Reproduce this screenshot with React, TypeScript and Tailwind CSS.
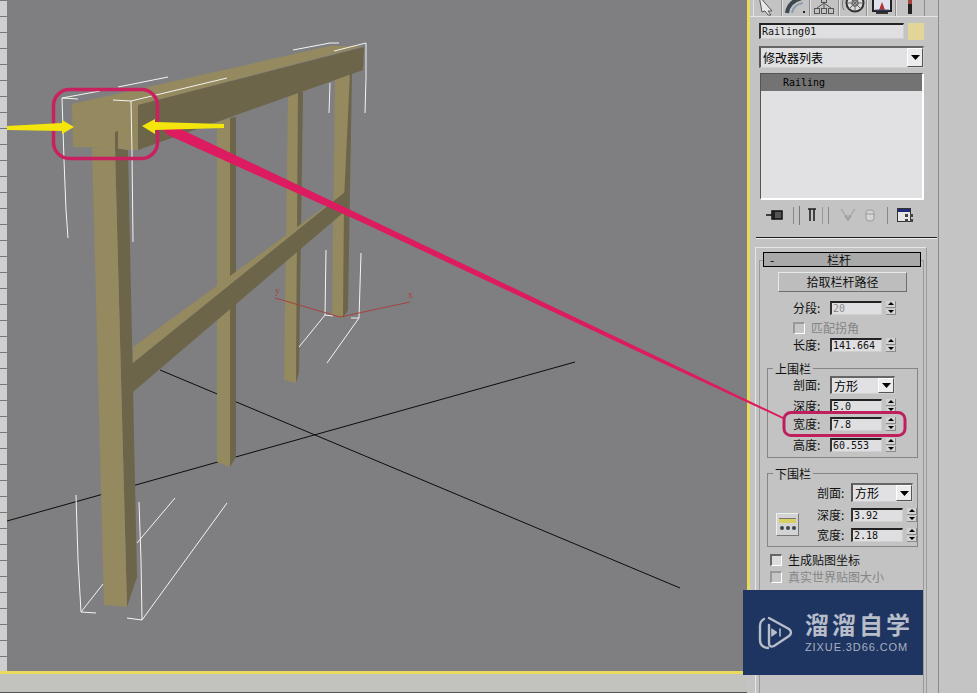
const cjk = "font-['Noto_Sans_CJK_SC','Liberation_Sans',sans-serif]"
const mono = "font-['DejaVu_Sans_Mono','Noto_Sans_CJK_SC',monospace]"

const ticks = Array.from({ length: 42 })

const wires = [
  '62,98 64,160 66,210 68,238', '62,98 78,99', '62,98 100,91', '118,87 168,77', '113,100 131,101',
  '131,101 132,153 133,242', '131,101 227,78', '293,50 330,43 339,43', '334,51 366,43',
  '366,43 366,77 365,113', '330,83 329,113', '326,250 325,315 333,316', '361,253 359,318 351,318',
  '325,315 299,347', '359,318 327,363', '76,495 78,560 81,612 96,613', '81,612 103,584',
  '139,502 141,560 142,620 127,618', '142,620 227,503', '137,543 175,498',
]

function Scene() {
  return (
    <svg width="740" height="671" viewBox="7 0 740 671" className="block">
      {/* home grid */}
      <path d="M7 521 L575 362 M160 370 L680 588" stroke="#0c0c0c" strokeWidth="1" fill="none" />
      {/* back posts */}
      <polygon points="335,77 350,72 346,312 343,318 332,315" fill="#94895f" />
      <polygon points="350,72 352,72 348,310 343,318 344,200" fill="#6d654a" />
      <polygon points="288,95 298,92 296,383 284,380" fill="#94895f" />
      <polygon points="298,92 303,92 299,373 296,383" fill="#6d654a" />
      <polygon points="217,122 230,118 230,467 217,462" fill="#94895f" />
      <polygon points="230,118 236,117 236,457 230,467" fill="#6d654a" />
      {/* mid rail */}
      <polygon points="133,347 345,192 133,363" fill="#94895f" />
      <polygon points="125,365 133,363 345,192 344,212 133,392 125,390" fill="#6d654a" />
      {/* top rail */}
      <polygon points="72,104 330,46 364,46 138,105" fill="#94895f" />
      <polygon points="138,105 364,47 363,70 138,150" fill="#6d654a" />
      {/* front post */}
      <polygon points="115,148 128,150 137,577 127,607" fill="#6d654a" />
      <polygon points="92,148 115,148 127,607 104,605" fill="#94895f" />
      <polygon points="72,104 130,100 138,105 138,150 128,150 115,148 73,147" fill="#94895f" />
      <polygon points="115,132 118,131 118,150 115,150" fill="#6d654a" />
      {/* selection box */}
      {wires.map(p => (
        <polyline key={p} points={p} stroke="#f4f4f4" strokeWidth="1" fill="none" />
      ))}
      {/* pivot */}
      <polyline points="275,298 340,317 410,302" stroke="#a5423c" strokeWidth="1" fill="none" />
      <text x="275" y="294" fontSize="10" fill="#a5423c" fontFamily="Liberation Serif">y</text>
      <text x="408" y="298" fontSize="10" fill="#a5423c" fontFamily="Liberation Serif">x</text>
    </svg>
  )
}

function Arrows() {
  return (
    <svg width="977" height="693" className="absolute left-0 top-0 pointer-events-none">
      <polygon points="160,127 172,125 360,214.5 660,358 783,417 783,419 660,362 360,221.5 168,135" fill="#dd1b60" />
      <rect x="53.5" y="89.5" width="104" height="69" rx="16" fill="none" stroke="#c9215f" strokeWidth="3.5" />
      <rect x="784" y="412.5" width="121" height="23" rx="7" fill="none" stroke="#bf1f5c" strokeWidth="3" />
      <polygon points="7,126 62,123 62,120 74,127 62,134 62,131 7,130" fill="#f4e60c" />
      <polygon points="224,124 155,122 155,119 142,126 155,134 155,130 224,128" fill="#f4e60c" />
    </svg>
  )
}

function TabIcon({ n }: { n: number }) {
  if (n === 0) return <svg width="26" height="16" viewBox="0 0 26 16"><path d="M5 -4 L18 11 L14 11 L17 15 L14 15 L11 11 L8 12 Z" fill="#e8e8e8" stroke="#555" /></svg>
  if (n === 1) return <svg width="26" height="16" viewBox="0 0 26 16"><path d="M4 13 C5 5 11 0 19 -2" stroke="#3c4750" strokeWidth="4" fill="none" /><path d="M9 13 C10 8 14 4 20 3" stroke="#8b9cb0" strokeWidth="2" fill="none" /><rect x="20" y="11" width="2" height="2" fill="#222" /></svg>
  if (n === 2) return <svg width="26" height="16" viewBox="0 0 26 16" fill="none" stroke="#555"><rect x="10.5" y="-2.5" width="5" height="5" /><rect x="3.5" y="8.5" width="5" height="5" /><rect x="10.5" y="8.5" width="5" height="5" /><rect x="17.5" y="8.5" width="5" height="5" /><path d="M13 2 V8 M13 3 L6 8 M13 3 L20 8" /></svg>
  if (n === 3) return <svg width="26" height="16" viewBox="0 0 26 16" fill="none"><circle cx="15" cy="3" r="8.5" fill="#ddd" stroke="#333" strokeWidth="2" /><circle cx="15" cy="3" r="3" stroke="#777" strokeWidth="1.5" /><path d="M15 -5 V11 M7 3 H23 M9 -3 L21 9 M21 -3 L9 9" stroke="#666" /><path d="M3 0 C2 4 2 7 4 10" stroke="#777" /></svg>
  if (n === 4) return <svg width="26" height="16" viewBox="0 0 26 16"><rect x="4" y="-4" width="18" height="15" fill="#dfe3ee" stroke="#222" strokeWidth="2" /><path d="M13 2 L16 10 H10 Z" fill="#b4342f" /><path d="M6 10 H20" stroke="#3f5a94" /><rect x="7" y="12" width="12" height="2" fill="#333" /></svg>
  return <svg width="26" height="16" viewBox="0 0 26 16"><rect x="11" y="-2" width="4" height="6" fill="#a6443a" /><rect x="11" y="4" width="4" height="10" fill="#222" /></svg>
}

function Tabs() {
  return (
    <div className="flex shrink-0 h-[17px] pl-[3px] border-b border-b-[#e4e4e4] overflow-hidden">
      {[0, 1, 2, 3, 4, 5].map(n => (
        <div key={n} className="w-[28.6px] h-[16px] flex justify-center border-l border-l-[#e2e2e2] border-r border-r-[#8d8d8d] overflow-hidden">
          <TabIcon n={n} />
        </div>
      ))}
    </div>
  )
}

function Arrow() {
  return <svg width="9" height="5" viewBox="0 0 9 5"><polygon points="0,0 9,0 4.5,5" fill="#000" /></svg>
}

function Select({ text, className }: { text: string; className: string }) {
  return (
    <div className={`flex shrink-0 items-center justify-between bg-[#e1e1e3] border-t-2 border-l-2 border-t-[#666] border-l-[#555] border-b border-r border-[#d0d0d0] ${className}`}>
      <span className={`pl-[2px] text-[12px] leading-none text-black ${cjk}`}>{text}</span>
      <div className="w-[16px] h-full flex items-center justify-center bg-[#ececec] border border-b-[#555] border-r-[#555] border-t-white border-l-white">
        <Arrow />
      </div>
    </div>
  )
}

function Spinner() {
  return (
    <div className="w-[10px] h-[14px] flex flex-col gap-px">
      {[0, 1].map(i => (
        <div key={i} className="flex-1 bg-[#d2d2d2] border-b border-b-[#8a8a8a] border-r border-r-[#8a8a8a] flex items-center justify-center">
          <svg width="6" height="3" viewBox="0 0 6 3"><polygon points={i === 0 ? '3,0 6,3 0,3' : '0,0 6,0 3,3'} fill="#000" /></svg>
        </div>
      ))}
    </div>
  )
}

function Field({ value, label, labelWidth = 'w-[37px]', fieldWidth = 'w-[52px]', disabled, className }: {
  value: string; label: string; labelWidth?: string; fieldWidth?: string; disabled?: boolean; className: string
}) {
  return (
    <div className={`flex items-center h-[14px] ${className}`}>
      <span className={`${labelWidth} text-[12px] leading-none text-[#111] ${cjk}`}>{label}:</span>
      <div className={`${fieldWidth} h-[14px] bg-[#dfdfe1] border-t-2 border-t-[#222] border-l-2 border-l-[#333] border-b border-r border-[#cfcfcf] flex items-center overflow-hidden`}>
        <span className={`pl-px text-[10px] leading-none ${mono} ${disabled ? 'text-[#8c8c8c]' : 'text-[#111]'}`}>{value}</span>
      </div>
      <div className="ml-[4px]"><Spinner /></div>
    </div>
  )
}

function Check({ label, disabled, className }: { label: string; disabled?: boolean; className: string }) {
  return (
    <div className={`flex items-center ${className}`}>
      <div className={`w-[12px] h-[12px] border-t-2 border-l-2 border-b border-r border-b-white border-r-white ${disabled ? 'border-t-[#999] border-l-[#999] bg-[#c6c6c6]' : 'border-t-[#666] border-l-[#666] bg-[#dcdcdc]'}`} />
      <span className={`ml-[6px] text-[12px] leading-none ${cjk} ${disabled ? 'text-[#858585]' : 'text-[#111]'}`}>{label}</span>
    </div>
  )
}

function Group({ title, className, children }: { title: string; className: string; children: React.ReactNode }) {
  return (
    <div className={`relative border border-[#858585] ${className}`}>
      <span className={`absolute left-[5px] -top-[7px] px-[2px] bg-[#c3c3c3] text-[12px] leading-[13px] text-[#111] ${cjk}`}>{title}</span>
      {children}
    </div>
  )
}

function Stack() {
  return (
    <div className="flex shrink-0 items-center h-[18px] mt-[6px] pl-[16px]">
      <svg width="17" height="14" viewBox="0 0 17 14" className="block"><path d="M0 7 H6 M6 3 H8 V11 H6 Z M8 3 H16 V11 H8 Z" stroke="#111" strokeWidth="1.5" fill="#555" /></svg>
      <div className="ml-[10px] w-px h-[17px] bg-[#888]" />
      <div className="ml-[5px] w-px h-[19px] bg-[#777]" />
      <svg width="9" height="14" viewBox="0 0 9 14" className="block ml-[8px]"><path d="M0 1 H8 M2 1 V13 M6 1 V13" stroke="#222" strokeWidth="1.6" fill="none" /></svg>
      <div className="ml-[5px] w-px h-[17px] bg-[#999]" />
      <div className="ml-[5px] w-px h-[17px] bg-[#888]" />
      <svg width="16" height="14" viewBox="0 0 16 14" className="block ml-[11px]"><path d="M1 1 L8 11 L15 1 M5 8 L8 13 L11 8 Z" stroke="#9a9a9a" fill="none" /></svg>
      <svg width="10" height="14" viewBox="0 0 10 14" className="block ml-[9px]"><rect x="1" y="2" width="8" height="11" rx="3" stroke="#9a9a9a" fill="#d4d4d4" /><path d="M1 6 H9" stroke="#9a9a9a" /></svg>
      <div className="ml-[12px] w-px h-[17px] bg-[#888]" />
      <svg width="17" height="15" viewBox="0 0 17 15" className="block ml-[9px]"><rect x="0.5" y="0.5" width="13" height="13" fill="#e6e6e6" stroke="#333" /><rect x="1" y="1" width="12" height="3" fill="#1c2a78" /><rect x="8" y="6" width="3" height="3" fill="#444" /><rect x="13" y="6" width="3" height="3" fill="#444" /><rect x="8" y="11" width="3" height="3" fill="#444" /><rect x="13" y="11" width="3" height="3" fill="#444" /></svg>
    </div>
  )
}

function Rollout() {
  return (
    <div className="mt-[8px] ml-[5px] w-[172px] flex-1 min-h-0 overflow-hidden border-l border-t border-r border-l-[#e6e6e6] border-t-[#e6e6e6] border-r-[#9c9c9c] pl-[3px]">
      <div className="mt-[12px] w-[165px] h-[500px] border border-[#9a9a9a]">
        <div className="-mt-[9px] ml-[3px] w-[158px] h-[15px] flex items-center border border-black bg-[#a9a9a9] px-[6px]">
          <span className={`w-[8px] text-[12px] leading-none text-black ${cjk}`}>-</span>
          <span className={`flex-1 text-center pr-[14px] text-[12px] leading-none text-[#111] ${cjk}`}>栏杆</span>
        </div>
        <div className={`mt-[5px] ml-[18px] w-[129px] h-[20px] flex items-center justify-center bg-[#bdbdbd] border border-t-[#e8e8e8] border-l-[#e8e8e8] border-b-[#6e6e6e] border-r-[#6e6e6e] text-[12px] leading-none text-[#111] ${cjk}`}>
          拾取栏杆路径
        </div>
        <Field label="分段" value="20" disabled className="mt-[9px] ml-[33px]" />
        <Check label="匹配拐角" disabled className="mt-[7px] ml-[33px]" />
        <Field label="长度" value="141.664" className="mt-[4px] ml-[33px]" />
        <Group title="上围栏" className="mt-[16px] ml-[7px] w-[151px] h-[90px]">
          <div className="mt-[7px] ml-[25px] flex items-center">
            <span className={`w-[37px] text-[12px] leading-none text-[#111] ${cjk}`}>剖面:</span>
            <Select text="方形" className="w-[65px] h-[18px]" />
          </div>
          <Field label="深度" value="5.0" className="mt-[5px] ml-[25px]" />
          <Field label="宽度" value="7.8" className="mt-[4px] ml-[25px]" />
          <Field label="高度" value="60.553" className="mt-[7px] ml-[25px]" />
        </Group>
        <Group title="下围栏" className="mt-[15px] ml-[7px] w-[151px] h-[74px]">
          <div className="flex">
            <div className="mt-[39px] ml-[8px] w-[23px] h-[23px] bg-[#d3d3d3] border border-t-[#eee] border-l-[#eee] border-b-[#777] border-r-[#777] flex flex-col items-center pt-[4px]">
              <div className="w-[17px] h-[5px] bg-[#d8cf62] border-t border-t-[#777]" />
              <div className="mt-[3px] flex gap-[2px]">
                <div className="w-[4px] h-[4px] rounded-full bg-[#3c4650]" />
                <div className="w-[4px] h-[4px] rounded-full bg-[#3c4650]" />
                <div className="w-[4px] h-[4px] rounded-full bg-[#3c4650]" />
              </div>
            </div>
            <div className="ml-[18px]">
              <div className="mt-[9px] flex items-center">
                <span className={`w-[34px] text-[12px] leading-none text-[#111] ${cjk}`}>剖面:</span>
                <Select text="方形" className="w-[62px] h-[19px]" />
              </div>
              <Field label="深度" value="3.92" labelWidth="w-[34px]" className="mt-[6px]" />
              <Field label="宽度" value="2.18" labelWidth="w-[34px]" className="mt-[6px]" />
            </div>
          </div>
        </Group>
        <Check label="生成贴图坐标" className="mt-[7px] ml-[10px]" />
        <Check label="真实世界贴图大小" disabled className="mt-[5px] ml-[10px]" />
      </div>
    </div>
  )
}

function Watermark() {
  return (
    <div className="absolute left-[743px] top-[590px] w-[180px] h-[85px] bg-[#1e3461] flex items-center pl-[15px]">
      <svg width="35" height="35" viewBox="0 0 35 35" fill="none" stroke="#b7bdc9" strokeWidth="2.4" strokeLinecap="round" strokeLinejoin="round" className="block">
        <path d="M11 3 L31 14 Q35 17.5 31 21 L16 31 Q11 33 11 28 V10" />
        <path d="M6 4 Q2 6 2 11 V25 Q2 32 10 33" />
        <polygon points="14,14 19,17.5 14,21" fill="#b7bdc9" strokeWidth="1" />
        <path d="M22 14 V21" strokeWidth="1.6" />
      </svg>
      <div className="ml-[12px] flex flex-col">
        <div className={`text-[24px] leading-[24px] font-bold tracking-[3px] text-[#b7bdc9] whitespace-nowrap ${cjk}`}>溜溜自学</div>
        <div className="mt-[5px] text-[11px] leading-[12px] tracking-[0.9px] text-[#a9b1c0] whitespace-nowrap font-['Liberation_Sans',sans-serif]">ZIXUE.3D66.COM</div>
      </div>
    </div>
  )
}

export default function App() {
  return (
    <div className="relative w-[977px] h-[693px] overflow-hidden flex bg-[#c4c4c4]">
      <div className="w-[747px] flex flex-col">
        <div className="flex h-[671px] shrink-0">
          <div className="w-[7px] bg-[#cfcfcf] overflow-hidden">
            {ticks.map((_, i) => (
              <div key={i} className="h-[16px] border-t border-t-[#777]" />
            ))}
          </div>
          <div className="flex-1 bg-[#7f7f81] overflow-hidden">
            <Scene />
          </div>
        </div>
        <div className="h-[3px] shrink-0 bg-[#e9d95c]" />
        <div className="flex-1 bg-[#c2c2be] border-b border-b-[#555]" />
      </div>
      <div className="w-[3px] h-[674px] bg-[#e9d95c]" />
      <div className="w-[189px] h-full flex flex-col bg-[#c3c3c3] border-r border-r-[#8a8a8a]">
        <Tabs />
        <div className="shrink-0 mt-[6px] ml-[9px] flex">
          <div className="w-[145px] h-[16px] bg-[#dfdfe1] border-t-2 border-l-2 border-t-[#222] border-l-[#333] border-b border-r border-[#cfcfcf] flex items-center">
            <span className={`pl-px text-[10px] leading-none text-[#111] ${mono}`}>Railing01</span>
          </div>
          <div className="ml-[4px] w-[16px] h-[17px] bg-[#e3d497]" />
        </div>
        <Select text="修改器列表" className="mt-[6px] ml-[9px] w-[165px] h-[22px]" />
        <div className="shrink-0 mt-[5px] ml-[10px] w-[164px] h-[127px] bg-[#e1e1e3] border-t border-l border-t-[#555] border-l-[#555] border-b-2 border-r-2 border-b-white border-r-white">
          <div className="h-[17px] bg-[#737373] flex items-center pl-[22px]">
            <span className={`text-[10px] leading-none text-black ${mono}`}>Railing</span>
          </div>
        </div>
        <Stack />
        <div className="shrink-0 mt-[13px] ml-[6px] w-[181px] h-[2px] bg-[#1c1c1c] border-b border-b-[#eee]" />
        <Rollout />
      </div>
      <Arrows />
      <Watermark />
    </div>
  )
}
